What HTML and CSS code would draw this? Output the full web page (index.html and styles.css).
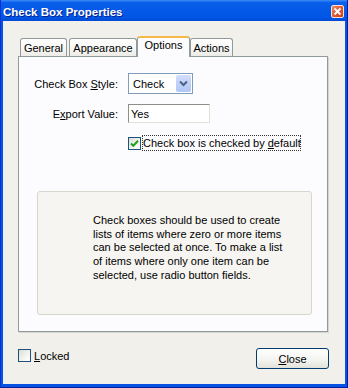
FILE: index.html
```html
<!DOCTYPE html>
<html>
<head>
<meta charset="utf-8">
<link rel="stylesheet" href="styles.css">
</head>
<body>
<div class="window">
  <div class="titlebar">
    <span class="title">Check Box Properties</span>
    <span class="close-x">
      <svg width="11" height="11" viewBox="0 0 11 11"><path d="M2.5 2.5 L8.5 8.5 M8.5 2.5 L2.5 8.5" stroke="#fff" stroke-width="1.8" fill="none"/></svg>
    </span>
  </div>
  <div class="client">
    <div class="tabs">
      <div class="tab tab-general">General</div>
      <div class="tab tab-appearance">Appearance</div>
      <div class="tab tab-options active">Options</div>
      <div class="tab tab-actions">Actions</div>
    </div>
    <div class="panel">
      <div class="form">
        <span class="lbl">Check Box <u>S</u>tyle:</span>
        <div class="select">
          <span class="select-text">Check</span>
          <span class="select-btn">
            <svg width="9" height="7" viewBox="0 0 9 7"><path d="M1 1.5 L4.5 5 L8 1.5" stroke="#4D6185" stroke-width="2" fill="none"/></svg>
          </span>
        </div>
        <span class="lbl">E<u>x</u>port Value:</span>
        <div class="textbox">Yes</div>
        <div class="check-row">
          <span class="checkbox">
            <svg width="11" height="11" viewBox="0 0 11 11"><path d="M2 5.5 L4.3 7.8 L9 2.8" stroke="#21A121" stroke-width="2" fill="none"/></svg>
          </span>
          <span class="focus-label">Check box is checked by <u>d</u>efault</span>
        </div>
      </div>
      <div class="info">
        <p class="info-text">Check boxes should be used to create<br>lists of items where zero or more items<br>can be selected at once. To make a list<br>of items where only one item can be<br>selected, use radio button fields.</p>
      </div>
    </div>
    <div class="footer">
      <div class="locked">
        <span class="checkbox"></span>
        <span class="locked-text"><u>L</u>ocked</span>
      </div>
      <div class="btn"><u>C</u>lose</div>
    </div>
  </div>
</div>
</body>
</html>
```

FILE: styles.css
```css
html, body {
  margin: 0;
  padding: 0;
}
body {
  width: 348px;
  height: 388px;
  overflow: hidden;
  font-family: "Liberation Sans", Arial, sans-serif;
  font-size: 11px;
  color: #000;
}
.window {
  width: 348px;
  height: 388px;
  box-sizing: border-box;
  background: #0852E2;
  border-left: 1px solid #0831D9;
  border-right: 1px solid #001EA0;
  border-bottom: 1px solid #001EA0;
  display: flex;
  flex-direction: column;
}
.titlebar {
  height: 21px;
  flex: none;
  display: flex;
  align-items: center;
  justify-content: space-between;
  padding: 0 3px 0 2px;
  background: linear-gradient(to bottom, #3B8CF7 0%, #0A5FEA 12%, #0358E6 50%, #0055E5 85%, #0049D4 100%);
}
.title {
  color: #fff;
  font-weight: bold;
  font-size: 11.5px;
  text-shadow: 1px 1px 0 #0A1E8A;
  margin-top: 2px;
}
.close-x {
  width: 13px;
  height: 13px;
  box-sizing: border-box;
  border: 1px solid #F6E0D8;
  border-radius: 2px;
  background: linear-gradient(135deg, #F08B66 0%, #E0552F 55%, #C8401C 100%);
  display: flex;
  align-items: center;
  justify-content: center;
  margin-top: 1px;
}
.client {
  flex: none;
  height: 363px;
  margin: 0 2px 0 2px;
  background: #F1F0EB;
  display: flex;
  flex-direction: column;
}
.tabs {
  display: flex;
  align-items: flex-end;
  height: 20px;
  margin: 15px 0 0 17px;
}
.tab {
  height: 18px;
  box-sizing: border-box;
  border: 1px solid #919B9C;
  border-bottom: none;
  border-radius: 3px 3px 0 0;
  background: linear-gradient(to bottom, #FFFFFF 0%, #F6F6F3 60%, #ECEBE6 100%);
  display: flex;
  align-items: center;
  justify-content: center;
  padding-top: 1px;
}
.tab-general { width: 47px; margin-right: 2px; }
.tab-appearance { width: 68px; }
.tab-options { width: 53px; }
.tab-actions { width: 43px; }
.tab.active {
  position: relative;
  z-index: 2;
  height: 21px;
  margin-bottom: -1px;
  background: #FCFCFE;
  border-top: 2px solid #F5B94A;
  padding-top: 0;
  padding-bottom: 5px;
}
.panel {
  margin-left: 15px;
  width: 310px;
  height: 276px;
  box-sizing: border-box;
  border: 1px solid #919B9C;
  background: #FCFCFE;
  box-shadow: 1px 1px 0 #D6D5CE;
  display: flex;
  flex-direction: column;
  padding-top: 16px;
}
.form {
  display: grid;
  grid-template-columns: 99px auto;
  column-gap: 10px;
  row-gap: 10px;
  align-items: center;
  justify-content: start;
}
.lbl {
  text-align: right;
}
.select {
  width: 65px;
  height: 21px;
  box-sizing: border-box;
  border: 1px solid #7F9DB9;
  background: #fff;
  display: flex;
  align-items: stretch;
}
.select-text {
  flex: 1;
  padding-left: 4px;
  display: flex;
  align-items: center;
}
.select-btn {
  width: 15px;
  margin: 1px;
  border-radius: 2px;
  background: linear-gradient(to bottom, #D2DEFB 0%, #BDCFF8 60%, #B0C6F6 100%);
  display: flex;
  align-items: center;
  justify-content: center;
}
.textbox {
  width: 82px;
  height: 19px;
  box-sizing: border-box;
  border: 1px solid;
  border-color: #8E8E88 #E2E1DA #E2E1DA #8E8E88;
  background: #fff;
  padding-left: 2px;
  display: flex;
  align-items: center;
}
.check-row {
  grid-column: 2;
  display: flex;
  align-items: center;
  height: 16px;
  margin-top: 2px;
}
.checkbox {
  width: 13px;
  height: 13px;
  box-sizing: border-box;
  border: 1px solid #1C5180;
  background: linear-gradient(135deg, #DCDCD7 0%, #F4F4F0 60%, #FFFFFF 100%);
  display: flex;
  align-items: center;
  justify-content: center;
  flex: none;
}
.focus-label {
  margin-left: 1px;
  padding: 1px 0 1px 1px;
  outline: 1px dotted #333;
  outline-offset: -1px;
  line-height: 14px;
}
.info {
  margin: 40px 0 0 18px;
  width: 275px;
  height: 124px;
  box-sizing: border-box;
  border: 1px solid #D8D7CD;
  border-radius: 3px;
  background: #F6F5F1;
  padding: 22px 0 0 55px;
}
.info-text {
  margin: 0;
  line-height: 13.7px;
  white-space: nowrap;
}
.footer {
  display: flex;
  justify-content: space-between;
  align-items: flex-start;
  margin-top: 16px;
  padding: 0 16px 0 15px;
}
.locked {
  display: flex;
  align-items: center;
  margin-top: 1px;
}
.locked-text {
  margin-left: 3px;
}
.btn {
  width: 73px;
  height: 21px;
  box-sizing: border-box;
  border: 1px solid #003C74;
  border-radius: 3px;
  background: linear-gradient(to bottom, #FFFFFF 0%, #F3F3EF 60%, #E3E2DA 100%);
  display: flex;
  align-items: center;
  justify-content: center;
}
```
